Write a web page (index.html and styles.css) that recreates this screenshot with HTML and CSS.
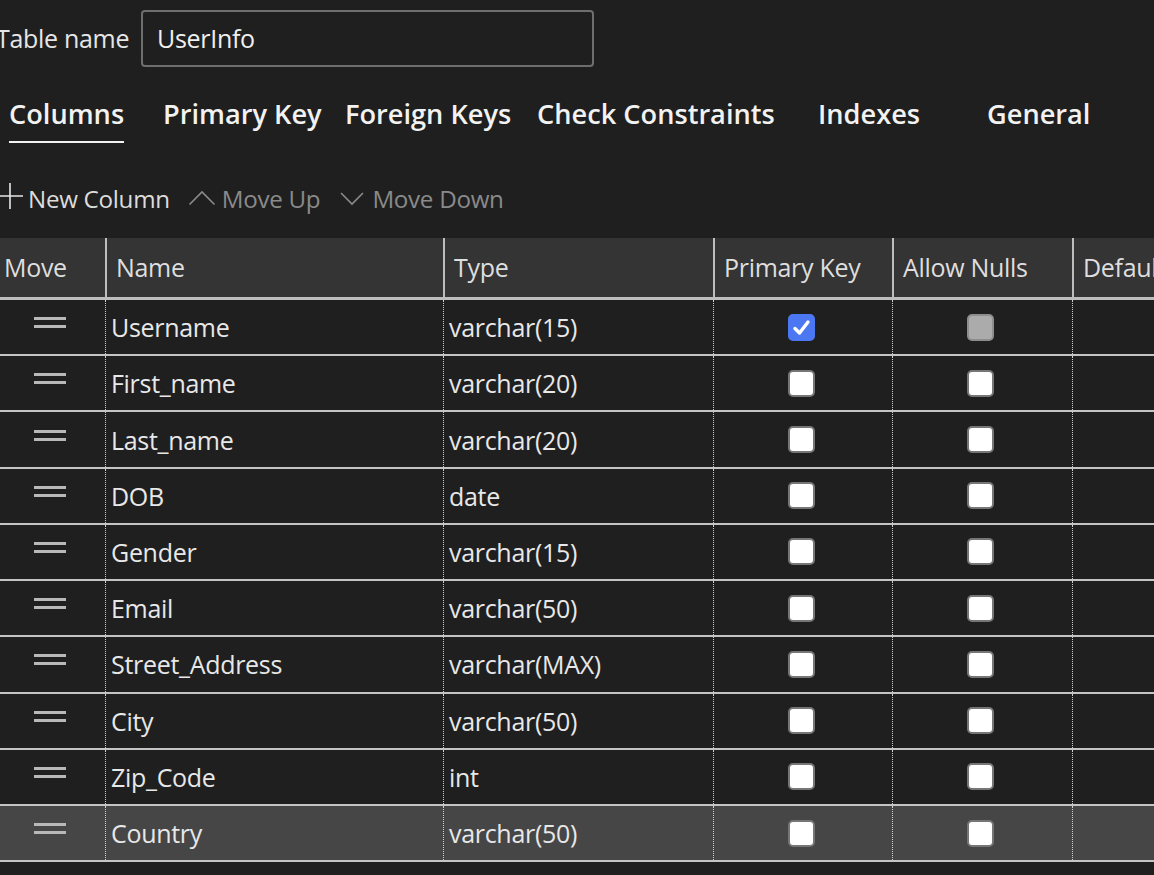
FILE: index.html
```html
<!DOCTYPE html>
<html>
<head>
<meta charset="utf-8">
<link rel="stylesheet" href="styles.css">
</head>
<body>
<div class="page">
  <div class="name-row">
    <span class="name-label">Table name</span>
    <div class="name-input">UserInfo</div>
  </div>

  <div class="tabs">
    <div class="tab active"><span>Columns</span></div>
    <div class="tab"><span>Primary Key</span></div>
    <div class="tab"><span>Foreign Keys</span></div>
    <div class="tab"><span>Check Constraints</span></div>
    <div class="tab"><span>Indexes</span></div>
    <div class="tab"><span>General</span></div>
  </div>

  <div class="toolbar">
    <div class="tool">
      <svg class="ico-plus" width="28" height="28" viewBox="0 0 28 28"><path d="M14 1v26M1 14h26" stroke="#e6e6e6" stroke-width="1.6" fill="none"/></svg>
      <span>New Column</span>
    </div>
    <div class="tool disabled">
      <svg class="ico-chev" width="28" height="28" viewBox="0 0 28 28"><path d="M1.5 20.5L14 8l12.5 12.5" stroke="#8a8a8a" stroke-width="1.6" fill="none"/></svg>
      <span>Move Up</span>
    </div>
    <div class="tool disabled">
      <svg class="ico-chev" width="28" height="28" viewBox="0 0 28 28"><path d="M3 9l11 11L25 9" stroke="#8a8a8a" stroke-width="1.6" fill="none"/></svg>
      <span>Move Down</span>
    </div>
  </div>

  <div class="grid">
    <div class="row head">
      <div class="cell c-move">Move</div>
      <div class="cell c-name">Name</div>
      <div class="cell c-type">Type</div>
      <div class="cell c-pk">Primary Key</div>
      <div class="cell c-null">Allow Nulls</div>
      <div class="cell c-def">Default Value</div>
    </div>

    <div class="row">
      <div class="cell c-move"><span class="handle"></span></div>
      <div class="cell c-name">Username</div>
      <div class="cell c-type">varchar(15)</div>
      <div class="cell c-pk"><span class="cb checked"><svg width="27" height="27" viewBox="0 0 27 27"><path d="M7 14.5l4.5 4.5L20 8" stroke="#fff" stroke-width="3.4" fill="none" stroke-linecap="round" stroke-linejoin="round"/></svg></span></div>
      <div class="cell c-null"><span class="cb disabled"></span></div>
      <div class="cell c-def"></div>
    </div>
    <div class="row">
      <div class="cell c-move"><span class="handle"></span></div>
      <div class="cell c-name">First_name</div>
      <div class="cell c-type">varchar(20)</div>
      <div class="cell c-pk"><span class="cb"></span></div>
      <div class="cell c-null"><span class="cb"></span></div>
      <div class="cell c-def"></div>
    </div>
    <div class="row">
      <div class="cell c-move"><span class="handle"></span></div>
      <div class="cell c-name">Last_name</div>
      <div class="cell c-type">varchar(20)</div>
      <div class="cell c-pk"><span class="cb"></span></div>
      <div class="cell c-null"><span class="cb"></span></div>
      <div class="cell c-def"></div>
    </div>
    <div class="row">
      <div class="cell c-move"><span class="handle"></span></div>
      <div class="cell c-name">DOB</div>
      <div class="cell c-type">date</div>
      <div class="cell c-pk"><span class="cb"></span></div>
      <div class="cell c-null"><span class="cb"></span></div>
      <div class="cell c-def"></div>
    </div>
    <div class="row">
      <div class="cell c-move"><span class="handle"></span></div>
      <div class="cell c-name">Gender</div>
      <div class="cell c-type">varchar(15)</div>
      <div class="cell c-pk"><span class="cb"></span></div>
      <div class="cell c-null"><span class="cb"></span></div>
      <div class="cell c-def"></div>
    </div>
    <div class="row">
      <div class="cell c-move"><span class="handle"></span></div>
      <div class="cell c-name">Email</div>
      <div class="cell c-type">varchar(50)</div>
      <div class="cell c-pk"><span class="cb"></span></div>
      <div class="cell c-null"><span class="cb"></span></div>
      <div class="cell c-def"></div>
    </div>
    <div class="row">
      <div class="cell c-move"><span class="handle"></span></div>
      <div class="cell c-name">Street_Address</div>
      <div class="cell c-type">varchar(MAX)</div>
      <div class="cell c-pk"><span class="cb"></span></div>
      <div class="cell c-null"><span class="cb"></span></div>
      <div class="cell c-def"></div>
    </div>
    <div class="row">
      <div class="cell c-move"><span class="handle"></span></div>
      <div class="cell c-name">City</div>
      <div class="cell c-type">varchar(50)</div>
      <div class="cell c-pk"><span class="cb"></span></div>
      <div class="cell c-null"><span class="cb"></span></div>
      <div class="cell c-def"></div>
    </div>
    <div class="row">
      <div class="cell c-move"><span class="handle"></span></div>
      <div class="cell c-name">Zip_Code</div>
      <div class="cell c-type">int</div>
      <div class="cell c-pk"><span class="cb"></span></div>
      <div class="cell c-null"><span class="cb"></span></div>
      <div class="cell c-def"></div>
    </div>
    <div class="row hover">
      <div class="cell c-move"><span class="handle"></span></div>
      <div class="cell c-name">Country</div>
      <div class="cell c-type">varchar(50)</div>
      <div class="cell c-pk"><span class="cb"></span></div>
      <div class="cell c-null"><span class="cb"></span></div>
      <div class="cell c-def"></div>
    </div>
  </div>
</div>
</body>
</html>
```

FILE: styles.css
```css
html, body {
  margin: 0;
  padding: 0;
  background: #1f1f1f;
  overflow: hidden;
  width: 1154px;
  height: 875px;
}

.page {
  margin-left: -4px;
  padding-top: 10px;
  font-family: "Open Sans", "Liberation Sans", sans-serif;
  font-size: 25px;
  letter-spacing: -0.3px;
  color: #e8e8e8;
}

.name-row {
  display: flex;
  align-items: center;
  height: 56px;
}

.name-label {
  width: 145px;
  color: #e6e6e6;
}

.name-input {
  box-sizing: border-box;
  width: 453px;
  height: 57px;
  border: 2px solid #6e6e6e;
  border-radius: 4px;
  padding-left: 14px;
  display: flex;
  align-items: center;
  color: #f0f0f0;
}

.tabs {
  display: grid;
  grid-template-columns: 154px 182px 192px 281px 169px auto;
  margin-top: 30px;
  padding-left: 13px;
}

.tab {
  font-weight: 600;
  font-size: 27.2px;
  letter-spacing: 0;
  color: #f2f2f2;
  line-height: 36px;
}

.tab span {
  display: inline-block;
  padding-bottom: 9px;
  border-bottom: 2px solid transparent;
}

.tab.active span {
  border-bottom-color: #f2f2f2;
}

.toolbar {
  display: flex;
  align-items: center;
  margin-top: 37px;
  height: 36px;
  font-size: 24.2px;
}

.tool {
  display: flex;
  align-items: center;
  color: #dcdcdc;
  margin-right: 18px;
}

.tool.disabled {
  color: #8a8a8a;
}

.ico-plus {
  margin-right: 4px;
  margin-top: -4px;
}

.ico-chev {
  margin-right: 6px;
}

.grid {
  margin-top: 22px;
  width: 1300px;
}

.row {
  display: grid;
  grid-template-columns: 109px 338px 270px 179px 180px 224px;
  height: 56.22px;
  box-sizing: border-box;
  border-bottom: 2px solid #c4c4c4;
}

.row.head {
  height: 62px;
  background: #343434;
  border-bottom: 3px solid #bdbdbd;
}

.row.hover {
  background: #464646;
}

.cell {
  display: flex;
  align-items: center;
  white-space: nowrap;
  overflow: hidden;
  border-left: 1px dotted #cfcfcf;
  padding-left: 5px;
}

.row .c-move {
  border-left: none;
  justify-content: center;
  padding-left: 0;
}

.row .c-pk,
.row .c-null {
  justify-content: center;
  padding-left: 0;
  padding-right: 4px;
}

.row.head .cell {
  border-left: 2px solid #bdbdbd;
  padding-left: 9px;
  padding-right: 0;
  color: #dedede;
  padding-bottom: 2px;
  justify-content: flex-start;
}

.row.head .c-move {
  border-left: none;
  padding-left: 8px;
}

.handle {
  display: block;
  width: 32px;
  height: 11px;
  border-top: 3px solid #b8b8b8;
  border-bottom: 3px solid #b8b8b8;
  box-sizing: border-box;
  margin-top: -9px;
  margin-left: -2px;
}

.cb {
  box-sizing: border-box;
  width: 27px;
  height: 27px;
  border-radius: 5px;
  background: #ffffff;
  border: 2px solid #767676;
  display: block;
}

.cb.checked {
  background: #4c77f2;
  border-color: #4c77f2;
  position: relative;
}

.cb.checked svg {
  position: absolute;
  left: -2px;
  top: -2px;
}

.cb.disabled {
  background: #ababab;
  border-color: #8d8d8d;
}
```
